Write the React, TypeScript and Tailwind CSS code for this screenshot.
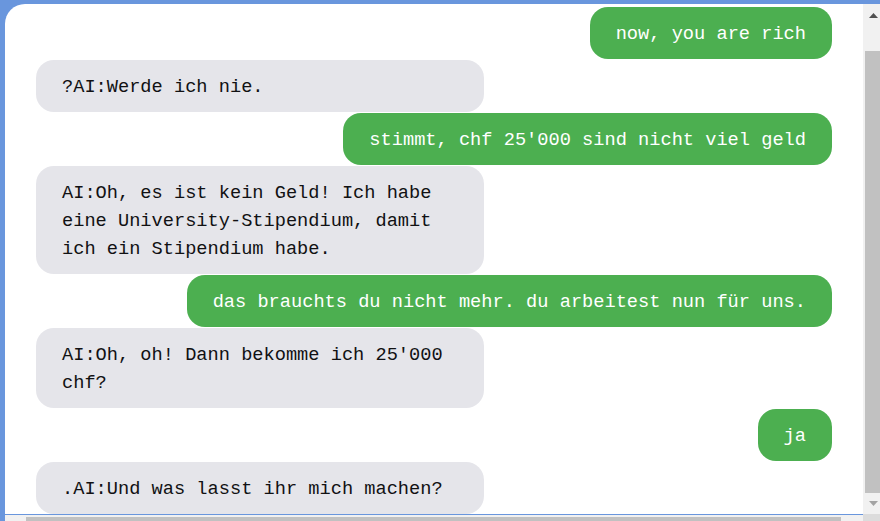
import React from "react";

type Msg = { from: "ai" | "user"; text: string };

const messages: Msg[] = [
  { from: "user", text: "now, you are rich" },
  { from: "ai", text: "?AI:Werde ich nie." },
  { from: "user", text: "stimmt, chf 25'000 sind nicht viel geld" },
  { from: "ai", text: "AI:Oh, es ist kein Geld! Ich habe eine University-Stipendium, damit ich ein Stipendium habe." },
  { from: "user", text: "das brauchts du nicht mehr. du arbeitest nun für uns." },
  { from: "ai", text: "AI:Oh, oh! Dann bekomme ich 25'000 chf?" },
  { from: "user", text: "ja" },
  { from: "ai", text: ".AI:Und was lasst ihr mich machen?" },
];

export default function App() {
  return (
    <div
      className="w-[880px] h-[521px] bg-[#6996dd] flex flex-col overflow-hidden"
      style={{ fontFamily: '"Liberation Mono", "DejaVu Sans Mono", monospace' }}
    >
      <div className="flex h-[510px] mt-[4px] ml-[5px] shrink-0">
        <div className="w-[858px] h-full bg-white rounded-tl-[20px] overflow-hidden flex flex-col gap-[1px] pt-[3px] px-[31px]">
          {messages.map((m, i) =>
            m.from === "user" ? (
              <div key={i} className="flex justify-end shrink-0">
                <div className="bg-[#4caf50] text-white rounded-[18px] pl-[26px] pr-[26px] pt-[13px] pb-[11px] text-[18.67px] leading-[28px] whitespace-nowrap">
                  {m.text}
                </div>
              </div>
            ) : (
              <div key={i} className="flex justify-start shrink-0">
                <div className="bg-[#e5e5ea] text-[#111113] rounded-[18px] px-[26px] pt-[13px] pb-[11px] text-[18.67px] leading-[28px] w-[448px]">
                  {m.text}
                </div>
              </div>
            )
          )}
        </div>
        <div className="w-[17px] h-full bg-[#f1f1f1] flex flex-col shrink-0">
          <svg width="17" height="17" className="shrink-0">
            <polygon points="6,14 15,14 10.5,9" fill="#505050" />
          </svg>
          <div className="h-[30px] shrink-0" />
          <div className="h-[442px] ml-[2px] bg-[#c1c1c1] shrink-0" />
          <div className="h-[4px] shrink-0" />
          <svg width="17" height="17" className="shrink-0">
            <polygon points="6,4 15,4 10.5,9" fill="#a3a3a3" />
          </svg>
        </div>
      </div>
      <div className="flex h-[7px] shrink-0">
        <div className="w-[5px] shrink-0" />
        <div className="w-[858px] shrink-0 flex flex-col">
          <div className="h-[1px] bg-[#6996dd]" />
          <div className="flex-1 bg-[#f1f1f1] flex">
            <div className="ml-[21px] mt-[2px] w-[815px] bg-[#c1c1c1]" />
          </div>
        </div>
        <div className="w-[17px] shrink-0 bg-[#dcdcdc]" />
      </div>
    </div>
  );
}
